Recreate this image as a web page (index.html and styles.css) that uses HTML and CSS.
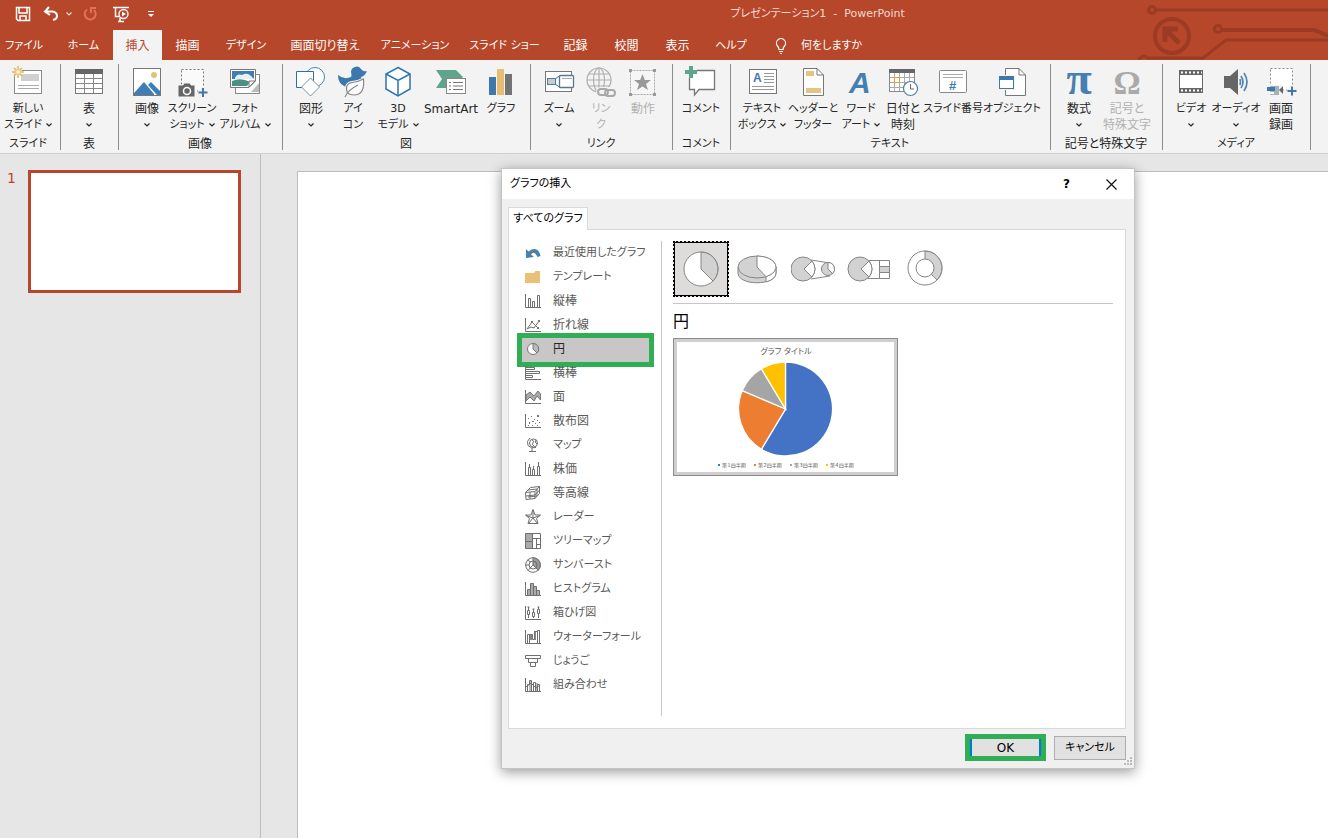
FILE: index.html
```html
<!DOCTYPE html>
<html lang="ja">
  <head>
    <meta charset="UTF-8" />
    <meta name="viewport" content="width=device-width, initial-scale=1.0" />
    <title>プレゼンテーション1 - PowerPoint</title>
    <link rel="stylesheet" href="styles.css">
  </head>
  <body>
    <svg class="defs" aria-hidden="true">
      <symbol id="chev" viewBox="0 0 6 4"><path d="M.5 .5L3 3L5.500 .5" fill="none" stroke="currentColor" stroke-width="1.200" /></symbol>
    </svg>

    <header class="top">
      <svg class="circuit" viewBox="0 0 190 60" aria-hidden="true">
        <g fill="none" stroke="#9c3b23" stroke-width="3">
          <circle cx="14" cy="10" r="3.500" />
          <path d="M18 10H190" />
          <circle cx="34" cy="36" r="17" stroke-width="4" />
          <path d="M41 43L29 31M27 42V29H40" stroke-width="5" />
          <circle cx="80" cy="29" r="3.500" />
          <path d="M84 30H176L190 36" stroke-width="4" />
          <path d="M0 60Q5 54 10 58H65L88 40H190" />
        </g>
      </svg>
      <div class="titlebar">
        <div class="quick">
          <button class="q" aria-label="上書き保存"><svg width="16" height="16" viewBox="0 0 16 16"><path d="M1.500 1.500H14.500V14.500H3L1.500 13zM4 2V7H12V2M5 14V10H11V14" fill="none" stroke="#fff" stroke-width="1.500" /></svg></button>
          <button class="q" aria-label="元に戻す"><svg width="16" height="16" viewBox="0 0 16 16"><path d="M6 1L2 5.500L7 9M2.500 5.500H9Q14 6 14 10Q14 13 10 14" fill="none" stroke="#fff" stroke-width="2" /></svg></button>
          <button class="q small" aria-label="元に戻す履歴"><svg width="6" height="4"><use href="#chev" /></svg></button>
          <button class="q redo" aria-label="繰り返し"><svg width="16" height="16" viewBox="0 0 16 16"><path d="M5 3.500A5.500 5.500 0 1 0 12 4M9 7V2H14" fill="none" stroke="#e5705a" stroke-width="2" /></svg></button>
          <button class="q" aria-label="最初から開始"><svg width="18" height="18" viewBox="0 0 18 18"><path d="M1 2.500H17M3.500 3V11.500H8M6 16.500H12M8 13V16" fill="none" stroke="#fff" stroke-width="1.500" /><circle cx="11.500" cy="9" r="4.500" fill="#b7472a" stroke="#fff" stroke-width="1.300" /><path d="M10 6.500L14 9L10 11.500z" fill="#fff" /></svg></button>
          <button class="q small" aria-label="クイック アクセス ツール バーのユーザー設定"><svg width="6" height="8" viewBox="0 0 6 8"><path d="M0 1.500H6" stroke="#fff" /><path d="M0 4H6L3 7z" fill="#fff" /></svg></button>
        </div>
        <span class="doc-title kana">プレゼンテーション1&nbsp; -&nbsp; PowerPoint</span>
      </div>
      <nav class="tabs">
        <a href="#" class="file kana">ファイル</a>
        <a href="#" class="kana">ホーム</a>
        <a href="#" class="active">挿入</a>
        <a href="#">描画</a>
        <a href="#" class="kana">デザイン</a>
        <a href="#">画面切り替え</a>
        <a href="#" class="kana">アニメーション</a>
        <a href="#" class="kana">スライド ショー</a>
        <a href="#">記録</a>
        <a href="#">校閲</a>
        <a href="#">表示</a>
        <a href="#" class="kana">ヘルプ</a>
        <a href="#" class="tell kana"><svg width="12" height="16" viewBox="0 0 12 16"><path d="M4 11.500Q4 9.500 2.500 8A4.500 4.500 0 1 1 9.500 8Q8 9.500 8 11.500zM4 13.500H8M5 15.500H7" fill="none" stroke="#fff" stroke-width="1.200" /></svg>何をしますか</a>
      </nav>
    </header>

    <div class="ribbon">
      <section class="group first">
        <div class="tools">
          <button class="tool w54 kana">
            <svg viewBox="0 0 32 32"><rect x="2.500" y="4.500" width="27" height="23" fill="#fff" stroke="#8a8a8a" /><path d="M9 8H27V15H9z" fill="#d0d0d0" /><path d="M6 19.500H27M6 22.500H27" stroke="#aaa" /><circle cx="6" cy="6" r="4" fill="#f2f2f2" /><path d="M6 0V12M0 6H12M2 2L10 10M10 2L2 10" stroke="#e6b95e" stroke-width="1.600" /><circle cx="6" cy="6" r="2" fill="#fff3d0" /></svg>
            <span>新しい</span><span>スライド<svg class="chev"><use href="#chev" /></svg></span>
          </button>
        </div>
        <h2 class="kana">スライド</h2>
      </section>
      <section class="group">
        <div class="tools">
          <button class="tool w42">
            <svg viewBox="0 0 32 32"><rect x="2.500" y="3.500" width="27" height="24" fill="#fff" stroke="#777" /><path d="M2 3H30V8H2z" fill="#666" /><path d="M11.500 8V27M20.500 8V27M3 12.500H29M3 17.500H29M3 22.500H29" stroke="#888" /></svg>
            <span>表</span><span><svg class="chev"><use href="#chev" /></svg></span>
          </button>
        </div>
        <h2>表</h2>
      </section>
      <section class="group">
        <div class="tools">
          <button class="tool w42">
            <svg viewBox="0 0 32 32"><rect x="2.500" y="2.500" width="27" height="27" fill="#fff" stroke="#777" /><circle cx="23" cy="9" r="3" fill="#e3c27a" /><path d="M3 27L13 16L23 28V29H3z" fill="#3f7db5" /><path d="M17 19L20 16L29 25V29H26z" fill="#3f7db5" /></svg>
            <span>画像</span><span><svg class="chev"><use href="#chev" /></svg></span>
          </button>
          <button class="tool w48 kana">
            <svg viewBox="0 0 32 32"><path d="M5.500 3.500H27.500V25H5.500z" fill="#fafafa" stroke="#777" stroke-dasharray="2 2" /><path d="M2 19H7L8 17H14L15 19H19V31H2z" fill="#666" stroke="#f3f3f3" /><circle cx="11" cy="25" r="3.500" fill="#666" stroke="#fff" stroke-width="1.500" /><path d="M27 21V31M22 26H32" stroke="#f3f3f3" stroke-width="4" /><path d="M27 22V31M22.500 26.500H31.500" stroke="#3f78aa" stroke-width="2" /></svg>
            <span>スクリーン</span><span>ショット<svg class="chev"><use href="#chev" /></svg></span>
          </button>
          <button class="tool w58 kana">
            <svg viewBox="0 0 32 32"><rect x="6.500" y="8.500" width="24" height="19" fill="#fff" stroke="#888" /><path d="M22 26L30 17V26z" fill="#bbb" /><path d="M1.500 3.500H26.500V15L20 21.500H1.500z" fill="#fff" stroke="#777" /><path d="M3 5H25V13H3z" fill="#3f7db5" /><path d="M6 12Q8 7 13 9Q18 6 22 10L25 13H6z" fill="#e8f0f3" /><path d="M3 15Q12 11 21 16L18 20H3z" fill="#4b9182" /><path d="M26 15H20V21z" fill="#fff" stroke="#777" /></svg>
            <span>フォト</span><span>アルバム<svg class="chev"><use href="#chev" /></svg></span>
          </button>
        </div>
        <h2>画像</h2>
      </section>
      <section class="group">
        <div class="tools">
          <button class="tool w42">
            <svg viewBox="0 0 32 32"><circle cx="20" cy="11" r="9.500" fill="#fff" stroke="#4a83b4" /><path d="M1.500 5.500H18.500V21.500H1.500z" fill="#fff" stroke="#2f6fa5" /><path d="M15.500 12L24.500 21L15.500 30L6.500 21z" fill="#fff" stroke="#7890a5" /></svg>
            <span>図形</span><span><svg class="chev"><use href="#chev" /></svg></span>
          </button>
          <button class="tool w42 kana">
            <svg viewBox="0 0 32 32"><path d="M1 9Q7 14 14 11Q15 9 14 6A5.500 5.500 0 0 1 24 3Q26 6 30 5Q28 10 24 11Q27 16 22 20Q15 26 7 20Q1 17 1 9z" fill="#3c77ad" /><path d="M10.500 27Q7 18 15 16.500Q21 16 26.500 13Q28 29 17 29Q13 29 10.500 27" fill="#fafafa" stroke="#f3f3f3" stroke-width="3" /><path d="M8 31Q11 24 21 19M10.500 27Q7 18 15 16.500Q21 16 26.500 13Q28 29 17 29Q13 29 10.500 27" fill="#fafafa" stroke="#888" stroke-width="1.200" /></svg>
            <span>アイ</span><span>コン</span>
          </button>
          <button class="tool w48 kana">
            <svg viewBox="0 0 32 32"><path d="M16 1.500L28 8V23L16 30L4 23V8z" fill="#fff" stroke="#2c74b3" stroke-width="1.500" /><path d="M4 8L16 14.500L28 8M16 14.500V30" fill="none" stroke="#2c74b3" stroke-width="1.500" /></svg>
            <span>3D</span><span>モデル<svg class="chev"><use href="#chev" /></svg></span>
          </button>
          <button class="tool w58">
            <svg viewBox="0 0 32 32"><path d="M1 4H21L28 11L25 14H11V22H1L7 13z" fill="#5fa58c" /><rect x="11.500" y="12.500" width="19" height="15" fill="#fff" stroke="#888" /><path d="M14 16.500H16M18 16.500H28M14 20H16M18 20H28M14 23.500H16M18 23.500H28" stroke="#777" /></svg>
            <span>SmartArt</span>
          </button>
          <button class="tool w42 kana">
            <svg viewBox="0 0 32 32"><path d="M4 11H11V29H4z" fill="#3f78ad" /><path d="M12 3H19V29H12z" fill="#e8bd72" /><path d="M20 8H27V29H20z" fill="#737373" /></svg>
            <span>グラフ</span>
          </button>
        </div>
        <h2>図</h2>
      </section>
      <section class="group">
        <div class="tools">
          <button class="tool w42 kana">
            <svg viewBox="0 0 32 32"><rect x="2.500" y="5.500" width="26" height="20" fill="#fff" stroke="#777" /><path d="M12 13L17 9.500M12 18L17 21.500" stroke="#2f6fa5" /><rect x="4.500" y="12.500" width="8" height="6" fill="#c5ccd2" stroke="#557a98" /><rect x="16.500" y="9.500" width="14" height="12" rx="1" fill="#fff" stroke="#557a98" stroke-width="1.300" /><path d="M19 12.500H29" stroke="#aaa" /></svg>
            <span>ズーム</span><span><svg class="chev"><use href="#chev" /></svg></span>
          </button>
          <button class="tool w42 kana" disabled>
            <svg viewBox="0 0 32 32"><g fill="none" stroke="#b0b0b0" stroke-width="1.200"><circle cx="14" cy="14" r="12" /><ellipse cx="14" cy="14" rx="5.500" ry="12" /><path d="M2 14H26M14 2V26M4 8H24M4 20H24" /></g><rect x="11" y="21" width="21" height="10" rx="5" fill="#f3f3f3" /><g fill="none" stroke="#a9a9a9" stroke-width="2"><rect x="13" y="23" width="10" height="6" rx="3" /><rect x="20" y="24" width="10" height="6" rx="3" /></g></svg>
            <span>リン</span><span>ク</span>
          </button>
          <button class="tool w42" disabled>
            <svg viewBox="0 0 32 32"><rect x="3.500" y="4.500" width="24" height="24" fill="#f6f6f6" stroke="#aaa" stroke-dasharray="2 1" /><path d="M2 3h3v3h-3zM26 3h3v3h-3zM2 27h3v3h-3zM26 27h3v3h-3z" fill="#999" /><path d="M15.500 8L17.800 14H24L19 18L21 24L15.500 20.500L10 24L12 18L7 14H13.200z" fill="#999" /></svg>
            <span>動作</span>
          </button>
        </div>
        <h2 class="kana">リンク</h2>
      </section>
      <section class="group">
        <div class="tools">
          <button class="tool w42 kana">
            <svg viewBox="0 0 32 32"><path d="M4.500 4.500H29.500V23.500H14L9.500 29V23.500H4.500z" fill="#fff" stroke="#777" stroke-width="1.300" /><path d="M6 0V12M0 6H12" stroke="#f3f3f3" stroke-width="6" /><path d="M6 0V12M0 6H12" stroke="#5fa58c" stroke-width="4" /></svg>
            <span>コメント</span>
          </button>
        </div>
        <h2 class="kana">コメント</h2>
      </section>
      <section class="group">
        <div class="tools">
          <button class="tool w48 kana">
            <svg viewBox="0 0 32 32"><rect x="3.500" y="3.500" width="27" height="24" fill="#fff" stroke="#777" /><text x="7" y="16" font-size="12" font-weight="bold" fill="#3f78aa">A</text><path d="M18 7.500H28M18 10.500H28M18 13.500H28M18 16.500H28M6 20.500H28M6 23.500H28" stroke="#999" /></svg>
            <span>テキスト</span><span>ボックス<svg class="chev"><use href="#chev" /></svg></span>
          </button>
          <button class="tool w54 kana">
            <svg viewBox="0 0 32 32"><path d="M6.500 2.500H20L26.500 9V29.500H6.500z" fill="#fff" stroke="#777" /><path d="M20 2.500V9H26.500" fill="none" stroke="#777" /><path d="M9 5H17V10H9zM9 22H24V27H9z" fill="#e5c480" /></svg>
            <span>ヘッダーと</span><span>フッター</span>
          </button>
          <button class="tool w42 kana">
            <svg viewBox="0 0 32 32"><text x="4" y="27" font-size="30" font-style="italic" font-weight="bold" fill="#4480b2">A</text></svg>
            <span>ワード</span><span>アート<svg class="chev"><use href="#chev" /></svg></span>
          </button>
          <button class="tool w42">
            <svg viewBox="0 0 32 32"><rect x="2.500" y="3.500" width="25" height="22" fill="#fff" stroke="#888" /><path d="M2 3H28V7H2z" fill="#666" /><path d="M7.500 7V25M12.500 7V25M17.500 7V25M22.500 7V25M3 11.500H27M3 16.500H27M3 21.500H27" stroke="#aaa" /><rect x="7.500" y="11.500" width="5" height="5" fill="#fff" stroke="#dd9d43" /><circle cx="23.500" cy="22.500" r="7" fill="#fff" stroke="#4c7fa8" stroke-width="1.200" /><path d="M23.500 18V23H27" fill="none" stroke="#666" /></svg>
            <span>日付と</span><span>時刻</span>
          </button>
          <button class="tool w58 kana">
            <svg viewBox="0 0 32 32"><rect x="2.500" y="4.500" width="27" height="22" rx="1" fill="#fff" stroke="#888" /><path d="M6 8.500H26M6 11.500H26" stroke="#aaa" /><text x="12" y="24" font-size="13" font-weight="bold" fill="#3f78aa">#</text></svg>
            <span>スライド番号</span>
          </button>
          <button class="tool w60 kana">
            <svg viewBox="0 0 32 32"><path d="M9.500 2.500H23L29.500 9V29.500H9.500z" fill="#fff" stroke="#777" /><path d="M23 2.500V9H29.500" fill="none" stroke="#777" /><rect x="2" y="9" width="17" height="15" fill="#f3f3f3" /><rect x="3.500" y="10.500" width="14" height="12" fill="#fff" stroke="#3f78aa" /><path d="M3 10H18V14H3z" fill="#3f78aa" /></svg>
            <span>オブジェクト</span>
          </button>
        </div>
        <h2 class="kana">テキスト</h2>
      </section>
      <section class="group">
        <div class="tools">
          <button class="tool w42">
            <svg viewBox="0 0 32 32"><text x="16" y="28" text-anchor="middle" font-family="Liberation Serif, serif" font-size="46" font-weight="bold" fill="#4480b2">π</text></svg>
            <span>数式</span><span><svg class="chev"><use href="#chev" /></svg></span>
          </button>
          <button class="tool w54" disabled>
            <svg viewBox="0 0 32 32"><text x="16" y="28" text-anchor="middle" font-family="Liberation Serif, serif" font-size="34" font-weight="bold" fill="#aaa">Ω</text></svg>
            <span>記号と</span><span>特殊文字</span>
          </button>
        </div>
        <h2>記号と特殊文字</h2>
      </section>
      <section class="group">
        <div class="tools">
          <button class="tool w42 kana">
            <svg viewBox="0 0 32 32"><rect x="4" y="4" width="24" height="23" fill="#666" /><path d="M5 9H27V22H5z" fill="#fff" /><path d="M6 6.500H27M6 24.500H27" stroke="#fff" stroke-width="2" stroke-dasharray="2 2" /></svg>
            <span>ビデオ</span><span><svg class="chev"><use href="#chev" /></svg></span>
          </button>
          <button class="tool w48 kana">
            <svg viewBox="0 0 32 32"><path d="M4 10H10L18 3V29L10 22H4z" fill="#666" /><path d="M21 10Q25 16 21 22M24 7Q30 16 24 25M20 13Q21 16 20 19" fill="none" stroke="#4f86b3" stroke-width="1.700" /></svg>
            <span>オーディオ</span><span><svg class="chev"><use href="#chev" /></svg></span>
          </button>
          <button class="tool w42">
            <svg viewBox="0 0 32 32"><path d="M5.500 2.500H27.500V24H5.500z" fill="#fff" stroke="#888" stroke-dasharray="2 2" /><rect x="1" y="19" width="16" height="12" fill="#f3f3f3" /><path d="M5 20H14V29H5z" fill="#a4b2bc" /><path d="M2 21H10V25H2z" fill="#3f78aa" /><path d="M4 26H9V28H4z" fill="#fff" /><path d="M14 24L18 20V28z" fill="#666" /><path d="M27 20V30M22 25H32" stroke="#f3f3f3" stroke-width="4" /><path d="M27 20.500V29.500M22.500 25H31.500" stroke="#3f78aa" stroke-width="2" /></svg>
            <span>画面</span><span>録画</span>
          </button>
        </div>
        <h2 class="kana">メディア</h2>
      </section>
    </div>

    <main class="work">
      <aside class="thumbs">
        <span class="num">1</span>
        <button class="thumb" aria-label="スライド 1"></button>
      </aside>
      <div class="editor">
        <div class="slide"></div>
      </div>
    </main>

    <section class="dialog" role="dialog" aria-labelledby="dlg-title">
      <div class="dlg-head">
        <h1 id="dlg-title" class="kana">グラフの挿入</h1>
        <button class="win help" aria-label="ヘルプ">?</button>
        <button class="win" aria-label="閉じる"><svg width="11" height="11" viewBox="0 0 11 11"><path d="M.5 .5L10.500 10.500M10.500 .5L.5 10.500" stroke="#111" stroke-width="1.200" /></svg></button>
      </div>
      <div class="dlg-body">
        <button class="dlg-tab kana">すべてのグラフ</button>
        <div class="panel">
          <div class="cats">
            <button class="cat kana"><svg viewBox="0 0 16 16"><path d="M1 4V13L9 12L6 9.500Q9 5 12.500 12L15.500 11Q13 0 3.500 6.500z" fill="#4a7fa9" /></svg>最近使用したグラフ</button>
            <button class="cat kana"><svg viewBox="0 0 16 16"><path d="M0 4H9L10.500 2H15V14H0z" fill="#eabf77" /></svg>テンプレート</button>
            <button class="cat"><svg viewBox="0 0 16 16"><path class="ax" d="M.5 1V14.500H16" /><path class="ln" d="M3.500 14V5.500H5.500V14M7.500 14V8.500H9.500V14M12.500 14V2.500H14.500V14" /></svg>縦棒</button>
            <button class="cat"><svg viewBox="0 0 16 16"><path class="ax" d="M.5 1V14.500H16" /><path class="ln" d="M2 12L7 5L13 11M2 12L6 10L9 11L14 4" /><path d="M6 4h2v2h-2zM12 10h2v2h-2zM13 3h2v2h-2z" fill="#777" /></svg>折れ線</button>
            <button class="cat selected"><svg viewBox="0 0 16 16"><circle cx="8" cy="8" r="5.500" fill="#fff" stroke="#777" /><path d="M8 2.500V8L12 12A5.500 5.500 0 0 0 8 2.500z" fill="#bbb" stroke="#777" /></svg>円</button>
            <button class="cat"><svg viewBox="0 0 16 16"><path class="ax" d="M.5 1V14.500H16" /><path class="ln" d="M1 2.500H9.500V4.500H1M1 6.500H14.500V8.500H1M1 10.500H7.500V12.500H1" /></svg>横棒</button>
            <button class="cat"><svg viewBox="0 0 16 16"><path d="M1 6L5 3L9 7L13 2L15.500 5V11L12 7L9 12L5 8L1 12z" fill="#aaa" stroke="#777" /><path class="ax" d="M.5 1V14.500H16" /></svg>面</button>
            <button class="cat"><svg viewBox="0 0 16 16"><path class="ax" d="M.5 1V14.500H16" /><path d="M3 5h1v1h-1zM6 3h1v1h-1zM9 6h1v1h-1zM12 2h2v2h-2zM4 9h1v2h-1zM7 8h2v1h-2zM10 10h1v1h-1zM12 7h1v1h-1zM14 9h1v1h-1zM3 12h1v1h-1zM7 12h1v1h-1zM12 12h1v1h-1z" fill="#777" /></svg>散布図</button>
            <button class="cat kana"><svg viewBox="0 0 16 16"><circle class="ln" cx="8.500" cy="6" r="4" /><path class="ln" d="M5 1Q1 4 3 8.500Q6 12 11 10.500M7 11V14M4 14.500H11M7 3Q10 4 8 6Q6 7 9 9M11 3Q9 5 12 7" /></svg>マップ</button>
            <button class="cat"><svg viewBox="0 0 16 16"><path class="ax" d="M.5 1V14.500H16" /><path class="ln" d="M3.500 14V6.500H5.500V14M7.500 14V8.500H9.500V14M12.500 14V5.500H14.500V14M4.500 3V6M8.500 5V8M13.500 1V5" /></svg>株価</button>
            <button class="cat"><svg viewBox="0 0 16 16"><path class="ln" d="M.5 7.500L5.500 2.500L14.500 1.500V8.500L10 13.500L1 14.500zM.5 7.500L10 6.500L14.500 1.500M10 6.500V13.500M3 5L12 4V11L3 12M5 7V14M1 11L10 10L14.500 5" /></svg>等高線</button>
            <button class="cat kana"><svg viewBox="0 0 16 16"><path class="ln" d="M8 .5L10 6L15.500 6L11.500 9.500L13 14.500H3L4.500 9.500L.5 6H6zM8 1V9L15 6.500M8 9L12.500 14.500M8 9L3.500 14.500M8 9L1 6.500" /></svg>レーダー</button>
            <button class="cat kana"><svg viewBox="0 0 16 16"><path d="M.5 .5H7.500V15.500H.5z" fill="#aaa" /><path class="ln" d="M.5 .5H15.500V15.500H.5zM7.500 .5V15.500M.5 8.500H7.500M7.500 5.500H15.500M11.500 5.500V15.500M11.500 11.500H15.500" /></svg>ツリーマップ</button>
            <button class="cat kana"><svg viewBox="0 0 16 16"><path d="M8 .5A7.500 7.500 0 0 1 13.500 13.500L8 8z" fill="#999" /><circle class="ln" cx="8" cy="8" r="7.300" /><circle class="ln" cx="8" cy="8" r="4" /><path class="ln" d="M8 .5V8L13.500 13.500M8 8L3 13.500M4 8H.5M5.500 5L2.500 3" /></svg>サンバースト</button>
            <button class="cat kana"><svg viewBox="0 0 16 16"><path d="M2.500 14V8.500H5.500V2.500H8.500V5.500H11.500V9.500H14.500V14z" fill="#aaa" /><path class="ax" d="M.5 1V14.500H16" /><path class="ln" d="M2.500 14V8.500H5.500V2.500H8.500V5.500H11.500V9.500H14.500V14M5.500 8V14M8.500 5V14M11.500 9V14" /></svg>ヒストグラム</button>
            <button class="cat kana"><svg viewBox="0 0 16 16"><path class="ax" d="M.5 1V14.500H16" /><path class="ln" d="M2.500 5.500H4.500V9.500H2.500zM7.500 7.500H9.500V11.500H7.500zM12.500 4.500H14.500V8.500H12.500zM3.500 2V5M3.500 10V13M8.500 4V7M8.500 12V13M13.500 2V4M13.500 9V13M2.500 2H4.500M7.500 4H9.500M12.500 2H14.500" /></svg>箱ひげ図</button>
            <button class="cat kana"><svg viewBox="0 0 16 16"><path class="ax" d="M.5 1V14.500H16" /><path d="M5 5H7V11H5zM9 2H11V11H9z" fill="#888" /><path class="ln" d="M2.500 14V5.500H4.500V14M4.500 5.500H7.500V10.500H9.500V2.500H12.500M12.500 14V1.500H14.500V14" /></svg>ウォーターフォール</button>
            <button class="cat kana"><svg viewBox="0 0 16 16"><path class="ln" d="M.5 2.500H15.500V5.500H.5zM3.500 5.500H12.500V9.500H3.500zM5.500 9.500H10.500V13.500H5.500z" /></svg>じょうご</button>
            <button class="cat kana"><svg viewBox="0 0 16 16"><path d="M4 4H7V14H4zM10 6H13V14H10z" fill="#bbb" /><path class="ax" d="M.5 1V14.500H16" /><path class="ln" d="M2.500 14V7.500H4.500V3.500H6.500V14M8.500 14V5.500H10.500V14M12.500 14V7.500H14.500V14M1 10L6 6L11 11L15 8" /></svg>組み合わせ</button>
          </div>
          <div class="detail">
            <div class="types">
              <button class="type on" aria-label="円"><svg viewBox="0 0 44 44"><circle cx="22" cy="22" r="17" fill="#fff" stroke="#858585" /><path d="M22 5V22L34 34A17 17 0 0 0 22 5z" fill="#d2d2d2" stroke="#858585" /></svg></button>
              <button class="type" aria-label="3-D 円"><svg viewBox="0 0 44 44"><path d="M3 20V26C3 39 41 39 41 26V20z" fill="#d2d2d2" stroke="#858585" /><path d="M31 29V35Q41 32 41 26V20z" fill="#fff" stroke="#858585" /><ellipse cx="22" cy="20" rx="19" ry="11" fill="#d2d2d2" stroke="#858585" /><path d="M22 9V20L31 29.700A19 11 0 0 0 22 9z" fill="#fff" stroke="#858585" /></svg></button>
              <button class="type" aria-label="補助円グラフ付き円"><svg viewBox="0 0 44 44"><path d="M20 13L39 16M20 32L39 29" stroke="#858585" /><circle cx="12" cy="22" r="12" fill="#d2d2d2" stroke="#858585" /><path d="M21 14L13 22L21 30Q27 22 21 14z" fill="#fff" stroke="#858585" /><circle cx="37" cy="22" r="6.500" fill="#d2d2d2" stroke="#858585" /><path d="M37 15.500V22L41.600 26.600A6.500 6.500 0 0 0 37 15.500z" fill="#fff" stroke="#858585" /></svg></button>
              <button class="type" aria-label="補助縦棒付き円"><svg viewBox="0 0 44 44"><path d="M18 13.500H33M18 31.500H33" stroke="#858585" /><circle cx="13" cy="22" r="12" fill="#d2d2d2" stroke="#858585" /><path d="M22 14L14 22L22 30Q28 22 22 14z" fill="#fff" stroke="#858585" /><path d="M32.500 13.500H42.500V31.500H32.500z" fill="#fff" stroke="#858585" /><path d="M32.500 19.500H42.500V25.500H32.500z" fill="#d2d2d2" stroke="#858585" /></svg></button>
              <button class="type" aria-label="ドーナツ"><svg viewBox="0 0 44 44"><circle cx="22" cy="21" r="17" fill="#fff" stroke="#858585" /><path d="M22 4V21L34 33A17 17 0 0 0 22 4z" fill="#d2d2d2" stroke="#858585" /><circle cx="22" cy="21" r="9" fill="#fff" stroke="#858585" /></svg></button>
            </div>
            <h3>円</h3>
            <button class="preview" aria-label="円グラフのプレビュー">
              <svg viewBox="0 0 217 130">
                <text x="109" y="12" text-anchor="middle" font-size="8" fill="#595959">グラフ タイトル</text>
                <g stroke="#fff" stroke-width="1.300" transform="translate(108.500 67)">
                  <path d="M0 0V-47A47 47 0 1 1 -24.100 40.300z" fill="#4472c4" />
                  <path d="M0 0L-24.100 40.300A47 47 0 0 1 -43.200 -18.400z" fill="#ed7d31" />
                  <path d="M0 0L-43.200 -18.400A47 47 0 0 1 -24.100 -40.300z" fill="#a5a5a5" />
                  <path d="M0 0L-24.100 -40.300A47 47 0 0 1 0 -47z" fill="#ffc000" />
                </g>
                <g font-size="5" fill="#595959">
                  <path d="M41 122h2v2h-2z" fill="#4472c4" /><text x="45" y="125">第１四半期</text>
                  <path d="M77 122h2v2h-2z" fill="#ed7d31" /><text x="81" y="125">第２四半期</text>
                  <path d="M113 122h2v2h-2z" fill="#a5a5a5" /><text x="117" y="125">第３四半期</text>
                  <path d="M149 122h2v2h-2z" fill="#ffc000" /><text x="153" y="125">第４四半期</text>
                </g>
              </svg>
            </button>
          </div>
        </div>
      </div>
      <div class="dlg-foot">
        <button class="ok">OK</button>
        <button class="cancel kana">キャンセル</button>
      </div>
      <svg class="grip" viewBox="0 0 10 10" aria-hidden="true"><path d="M7 0h2v2h-2zM7 3h2v2h-2zM7 6h2v2h-2zM4 3h2v2h-2zM4 6h2v2h-2zM1 6h2v2h-2z" fill="#bbb" /></svg>
    </section>
  </body>
</html>
```
FILE: styles.css
```css
* {
  margin: 0;
  padding: 0;
  box-sizing: border-box;
}
body {
  position: relative;
  display: flex;
  flex-direction: column;
  min-height: 100vh;
  overflow-x: hidden;
  background-color: #e6e6e6;
  font-family: "DejaVu Sans", "Noto Sans CJK JP", sans-serif;
  font-feature-settings: "palt";
  font-size: 12px;
  line-height: 16px;
  color: #262626;
}
button {
  border: none;
  background: none;
  font: inherit;
  font-feature-settings: inherit;
  color: inherit;
}
a {
  color: inherit;
  text-decoration: none;
}
h1,
h2,
h3 {
  font-size: 12px;
  font-weight: 400;
}
/* kana labels run wider than kanji ones */
.kana {
  font-size: 11px;
}
.defs {
  position: absolute;
  width: 0;
  height: 0;
}

/* title bar and tabs */
.top {
  position: relative;
  background-color: #b7472a;
  color: #fff;
}
.circuit {
  position: absolute;
  top: 0;
  right: 0;
  width: 190px;
  height: 60px;
}
.titlebar {
  display: grid;
  grid-template-columns: 55% 1fr;
  align-items: center;
  height: 30px;
  padding-bottom: 2px;
  color: #f3d9d1;
}
.quick {
  display: flex;
  align-items: center;
  height: 26px;
  padding-left: 9px;
}
.q {
  display: flex;
  justify-content: center;
  width: 28px;
}
.q.small {
  width: 8px;
}
.q.redo {
  width: 34px;
}
.q:last-child {
  margin-left: 12px;
}
.tabs {
  display: grid;
  grid-template-columns: 54px 59px 49px 51px 66px 92px 88px 91px 51px 51px 51px 56px 120px;
  height: 30px;
  line-height: 28px;
  text-align: center;
  white-space: nowrap;
}
.tabs a {
  padding-top: 2px;
}
.tabs .file {
  padding-right: 6px;
}
.active {
  background-color: #f3f3f3;
  color: #b7472a;
}
.tabs .tell {
  display: flex;
  align-items: center;
  gap: 14px;
  padding-left: 16px;
}

/* ribbon */
.ribbon {
  display: flex;
  padding: 4px 0 3px;
  background-color: #f3f3f3;
  border-bottom: 1px solid #cfcfcf;
  white-space: nowrap;
}
.group {
  display: flex;
  flex-direction: column;
  flex-shrink: 0;
  height: 86px;
  padding: 2px 8px 0 7px;
  border-right: 1px solid #8c8c8c;
}
.group.first {
  padding: 2px 5px 0 1px;
}
.group h2 {
  margin: auto 0 -2px;
  text-align: center;
}
.tools {
  display: flex;
  align-items: flex-start;
}
.tool {
  display: flex;
  flex-direction: column;
  align-items: center;
}
.tool > svg {
  width: 32px;
  height: 32px;
  margin-bottom: 3px;
  overflow: visible;
  font-family: "Liberation Sans", sans-serif;
}
.tool span {
  display: flex;
  align-items: center;
  gap: 4px;
  height: 16px;
}
.tool:disabled {
  color: #b1b1b1;
}
.chev {
  width: 6px;
  height: 4px;
}
.w42 {
  width: 42px;
}
.w48 {
  width: 48px;
}
.w54 {
  width: 54px;
}
.w58 {
  width: 58px;
}
.w60 {
  width: 60px;
}

/* slides */
.work {
  display: flex;
  flex: 1;
}
.thumbs {
  display: flex;
  align-items: flex-start;
  gap: 12px;
  width: 261px;
  padding: 16px 19px 0 7px;
  border-right: 1px solid #bdbdbd;
}
.num {
  font-size: 14px;
  color: #b7472a;
}
.thumb {
  flex: 1;
  height: 123px;
  background-color: #fff;
  border: 3px solid #b7472a;
}
.editor {
  display: flex;
  flex: 1;
  padding: 17px 0 0 36px;
}
.slide {
  flex: 1;
  background-color: #fff;
  border: 1px solid #bdbdbd;
  border-width: 1px 0 0 1px;
}

/* insert chart dialog */
.dialog {
  position: absolute;
  top: 168px;
  left: 501px;
  width: 634px;
  background-color: #f0f0f0;
  border: 1px solid #c4c4c4;
  box-shadow: 0 3px 12px rgba(0, 0, 0, 0.4);
}
.dlg-head {
  display: flex;
  align-items: center;
  height: 30px;
  padding-left: 8px;
  background-color: #fff;
  color: #000;
}
.dlg-head h1 {
  flex: 1;
  font-size: 11px;
}
.group .kana {
  font-size: 11px;
}
.win {
  display: flex;
  justify-content: center;
  width: 45px;
}
.help {
  font-weight: 700;
}
.dlg-body {
  padding: 8px 8px 0 6px;
}
.dlg-tab {
  position: relative;
  z-index: 1;
  display: block;
  width: 80px;
  height: 23px;
  margin-bottom: -1px;
  background-color: #fff;
  border: 1px solid #d9d9d9;
  border-bottom: none;
  font-size: 11px;
  color: #000;
  white-space: nowrap;
}
.panel {
  display: flex;
  height: 500px;
  padding: 11px 12px 12px 13px;
  background-color: #fff;
  border: 1px solid #d9d9d9;
}
.cats {
  width: 140px;
  padding: 1px 12px 0 0;
  border-right: 1px solid #c6c6c6;
}
.cat {
  display: flex;
  align-items: center;
  gap: 12px;
  width: 127px;
  height: 24px;
  padding: 0 0 2px 3px;
  color: #595959;
  white-space: nowrap;
}
.cat svg {
  flex-shrink: 0;
  width: 16px;
  height: 16px;
}
.cat.selected {
  background-color: #c8c6c6;
  color: #262626;
  box-shadow: 0 0 0 5px #2fae55;
}
.ax,
.ln {
  fill: none;
  stroke: #6f6f6f;
}
.detail {
  flex: 1;
  padding-left: 11px;
}
.types {
  display: flex;
  padding-bottom: 6px;
  border-bottom: 1px solid #c6c6c6;
}
.type {
  display: flex;
  align-items: center;
  justify-content: center;
  width: 56px;
  height: 56px;
}
.type.on {
  background-color: #dedcdb;
  border: 2px dotted #000;
  outline: 1px solid #000;
  outline-offset: -2px;
}
.type svg {
  flex-shrink: 0;
  width: 44px;
  height: 44px;
}
.detail h3 {
  padding: 6px 0 4px;
  font-size: 16px;
  line-height: 24px;
  color: #000;
}
.preview {
  display: block;
  width: 225px;
  background-color: #fff;
  border: 1px solid #8c8c8c;
  box-shadow: inset 0 0 0 3px #cfcfcf;
  padding: 3px;
}
.preview svg {
  display: block;
}
.dlg-foot {
  display: flex;
  align-items: center;
  justify-content: flex-end;
  gap: 13px;
  height: 39px;
  padding: 0 8px 2px 0;
  color: #000;
}
.ok {
  width: 71px;
  height: 17px;
  background-color: #e1e1e1;
  border: 2px solid #0078d7;
  border-width: 0 2px;
  box-shadow: 0 0 0 5px #2fae55;
}
.cancel {
  width: 72px;
  height: 24px;
  background-color: #e1e1e1;
  border: 1px solid #adadad;
  font-size: 11px;
}
.grip {
  position: absolute;
  right: 1px;
  bottom: 1px;
  width: 10px;
  height: 10px;
}
```
